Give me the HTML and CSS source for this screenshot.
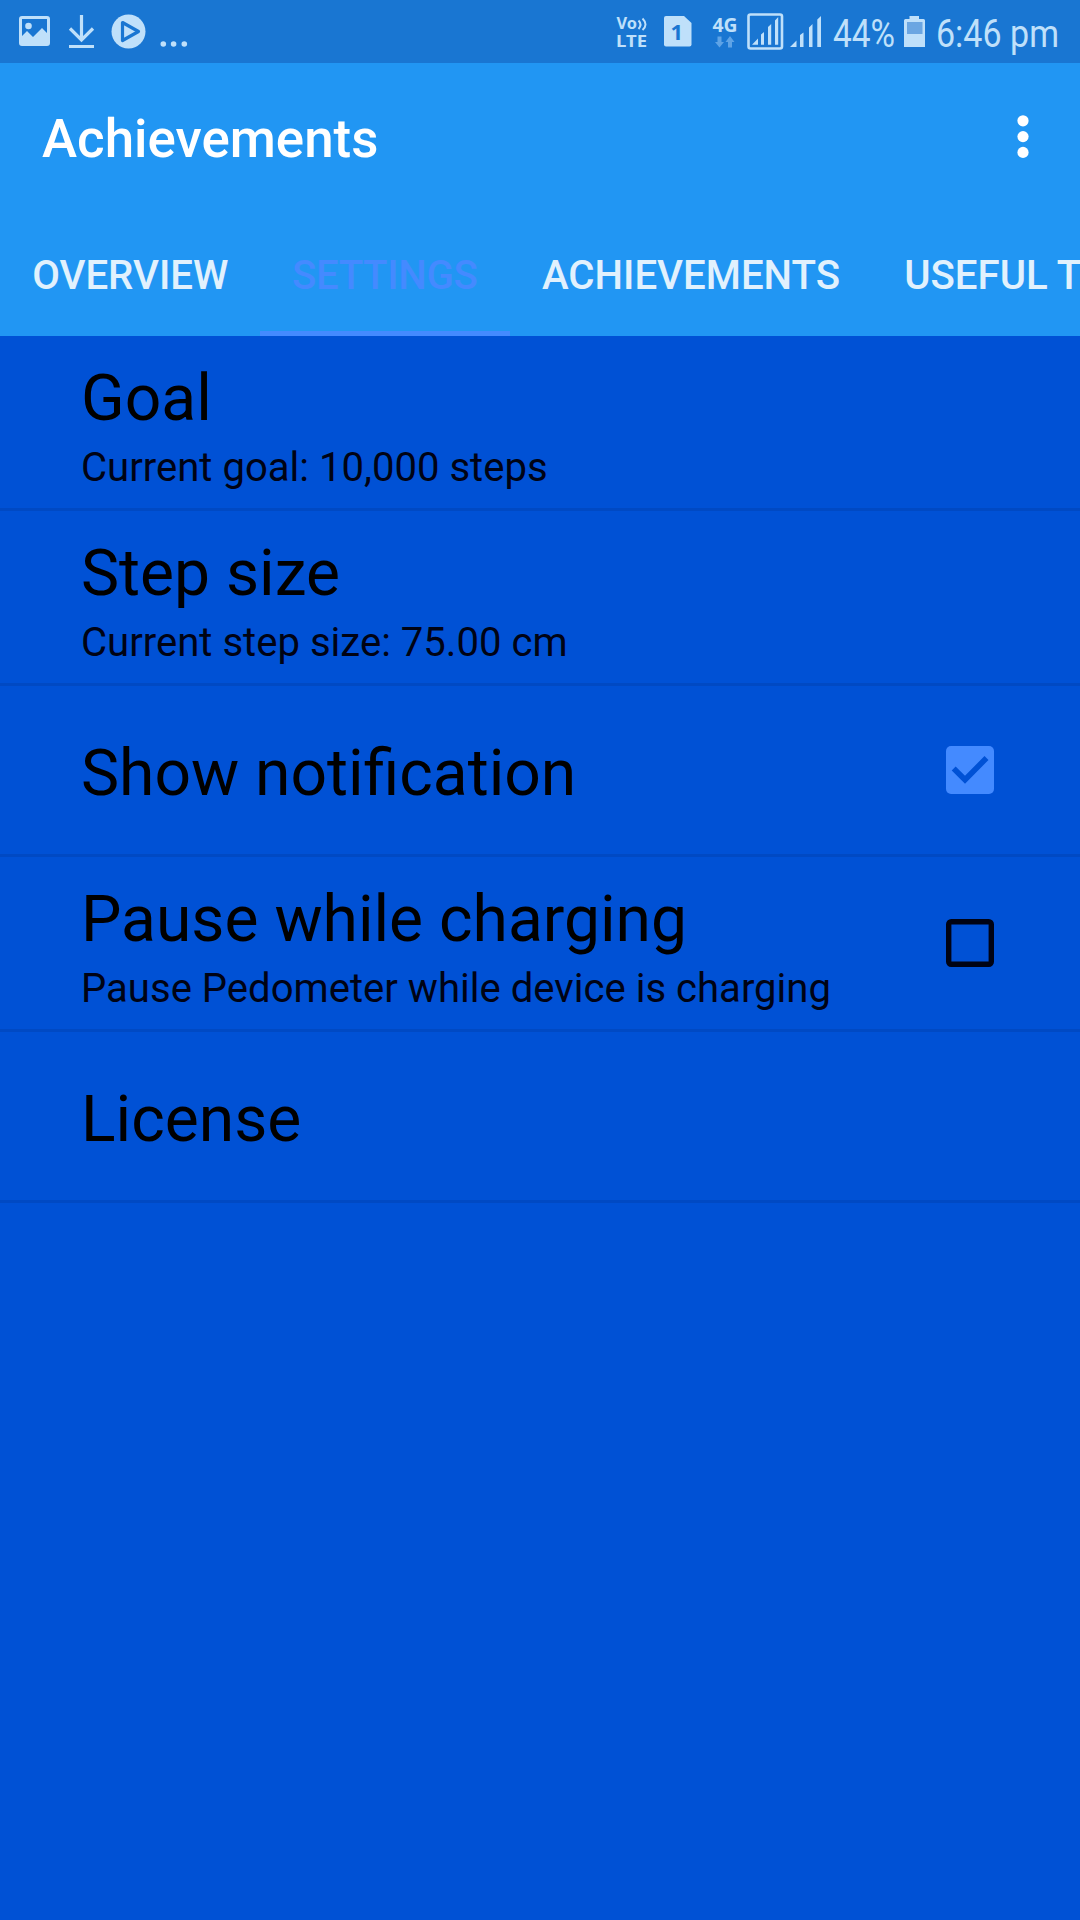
FILE: index.html
```html
<!DOCTYPE html>
<html lang="en">
<head>
<meta charset="utf-8">
<title>Achievements</title>
<link rel="stylesheet" href="styles.css">
</head>
<body>
<header class="status-bar">
  <svg class="notifications" viewBox="0 0 200 63" width="200" height="63">
    <rect x="20.5" y="17.5" width="28" height="27" rx="1.5" fill="none" stroke="currentColor" stroke-width="3"/>
    <circle cx="28.5" cy="26" r="3.3"/>
    <path d="M20 38l7-7 6 6 9-9 7 7v10H20z"/>
    <path d="M81.5 15v25M70 28.500l11.500 11.500L93 28.500M69 46.500h25" fill="none" stroke="currentColor" stroke-width="3.200"/>
    <circle cx="128.500" cy="31.500" r="17"/>
    <path class="play" d="M122.500 22.500l16 9-16 9z"/>
    <circle cx="163.300" cy="44" r="2.800"/><circle cx="173.600" cy="44" r="2.800"/><circle cx="184.300" cy="44" r="2.800"/>
  </svg>
  <svg class="system" viewBox="600 0 480 63" width="480" height="63">
    <text class="volte" x="616.500" y="29.300" textLength="20.500" lengthAdjust="spacingAndGlyphs">Vo</text>
    <path d="M638.500 20.500q4 4 0 8.500M642.500 18.500q6 6 0 11.500" fill="none" stroke="currentColor" stroke-width="2"/>
    <text class="volte" x="616" y="47" textLength="31" lengthAdjust="spacingAndGlyphs">LTE</text>
    <path d="M666 16h18l7.500 7v21.500a2 2 0 0 1-2 2H666a2 2 0 0 1-2-2V18a2 2 0 0 1 2-2z"/>
    <text class="sim" x="670.500" y="40.300">1</text>
    <text class="net" x="712.500" y="31.500" textLength="25" lengthAdjust="spacingAndGlyphs">4G</text>
    <path class="data" d="M717.500 36.500h4V42h2.500l-4.500 5.500-4.500-5.500h2.500zM728 47.500h4V42h2.500L730 36l-4.500 6h2.500z"/>
    <rect x="748.500" y="14.500" width="33.500" height="34" rx="2" fill="none" stroke="currentColor" stroke-width="2.600"/>
    <path d="M752 44.700h6V38.500zM761 44.700V34.500l3-2.500v12.700zM768 44.700V27l3.200-3v20.700zM775 44.700V20.500l3.200-3.500v27.700z"/>
    <path d="M790 47h6.500v-6.500zM800 47V35l3.500-2.500V47zM809 47V27.500l3.500-3.500v23zM817.300 47V19.500L821 16v31z"/>
    <text class="clock" x="833" y="46.700" textLength="62" lengthAdjust="spacingAndGlyphs">44%</text>
    <path d="M909.500 16h9.500v3h4.500a1.500 1.500 0 0 1 1.500 1.500V47h-21V20.500a1.500 1.500 0 0 1 1.500-1.500h4z"/>
    <rect class="empty" x="907" y="22" width="15.500" height="12"/>
    <text class="clock" x="936" y="46.700" textLength="123" lengthAdjust="spacingAndGlyphs">6:46 pm</text>
  </svg>
</header>

<div class="app-bar">
  <h1 class="app-title">Achievements</h1>
  <svg class="overflow" viewBox="0 0 12 44" width="12" height="44">
    <circle cx="6" cy="5.800" r="5.600"/><circle cx="6" cy="21.600" r="5.600"/><circle cx="6" cy="37.400" r="5.600"/>
  </svg>
</div>

<nav class="tabs">
  <a class="tab">OVERVIEW</a>
  <a class="tab tab-active">SETTINGS</a>
  <a class="tab">ACHIEVEMENTS</a>
  <a class="tab">USEFUL TIPS</a>
</nav>

<main class="list">
  <div class="row row-two">
    <div><div class="title">Goal</div><div class="summary">Current goal: 10,000 steps</div></div>
  </div>
  <div class="row row-two">
    <div><div class="title">Step size</div><div class="summary">Current step size: 75.00 cm</div></div>
  </div>
  <div class="row">
    <div class="title">Show notification</div>
    <svg class="check" viewBox="0 0 48 48" width="48" height="48">
      <rect class="check-fill" width="48" height="48" rx="5"/>
      <path class="check-mark" d="M7.700 22.500L19 33.700 40.500 12"/>
    </svg>
  </div>
  <div class="row row-two">
    <div><div class="title">Pause while charging</div><div class="summary">Pause Pedometer while device is charging</div></div>
    <svg class="check" viewBox="0 0 48 48" width="48" height="48">
      <rect class="check-box" x="2.700" y="2.700" width="42.600" height="42.600" rx="2.500"/>
    </svg>
  </div>
  <div class="row">
    <div class="title">License</div>
  </div>
</main>
</body>
</html>
```
FILE: styles.css
```css
* { box-sizing: border-box; }

body {
  margin: 0;
  width: 1080px;
  height: 1920px;
  overflow: hidden;
  background: #0051d5;
  font-family: Roboto, sans-serif;
  color: #000;
}

.status-bar {
  display: flex;
  justify-content: space-between;
  height: 63px;
  background: #1976d2;
  color: #bfe0fa;
}
.status-bar svg { display: block; fill: currentColor; }
.play { stroke: #1976d2; stroke-width: 3.2; stroke-linejoin: round; }
.volte { font: 700 16px "Noto Sans", sans-serif; }
.sim { font: 700 22px "Noto Sans", sans-serif; fill: #1976d2; }
.net { font: 700 19px "Noto Sans", sans-serif; }
.data { fill: #5ea3e6; }
.clock { font: 400 39px Roboto, sans-serif; }
.empty { fill: #6ba6e2; }

.app-bar {
  display: flex;
  justify-content: space-between;
  align-items: center;
  height: 147px;
  padding: 0 51.500px 0 42px;
  background: #2196f3;
  color: #fff;
}
.app-title {
  margin: 5px 0 0;
  font-size: 52.900px;
  font-weight: 500;
  line-height: 62px;
}
.overflow { fill: #fff; }

.tabs {
  display: flex;
  height: 126px;
  overflow: hidden;
  background: #2196f3;
}
.tab {
  flex: none;
  padding: 35px 32px 0 32.200px;
  font-size: 40.200px;
  font-weight: 500;
  line-height: 61px;
  color: #e1f1fd;
}
.tab-active {
  width: 249.300px;
  padding-left: 31.500px;
  letter-spacing: -0.350px;
  border-bottom: 5px solid #448aff;
  color: #448aff;
}

.row {
  display: flex;
  justify-content: space-between;
  align-items: center;
  height: 171px;
  padding: 0 86px 0 81px;
  border-bottom: 3px solid #0049c3;
}
.row-two { height: 175px; }
.title {
  padding-top: 6px;
  font-size: 64.150px;
  line-height: 76px;
}
.summary {
  margin-top: 8px;
  margin-bottom: -1px;
  font-size: 40.080px;
  line-height: 48px;
  color: #000314;
}
.check-fill { fill: #448aff; }
.check-mark { fill: none; stroke: #0051d5; stroke-width: 5.6; }
.check-box { fill: none; stroke: #000314; stroke-width: 5.4; }
```
